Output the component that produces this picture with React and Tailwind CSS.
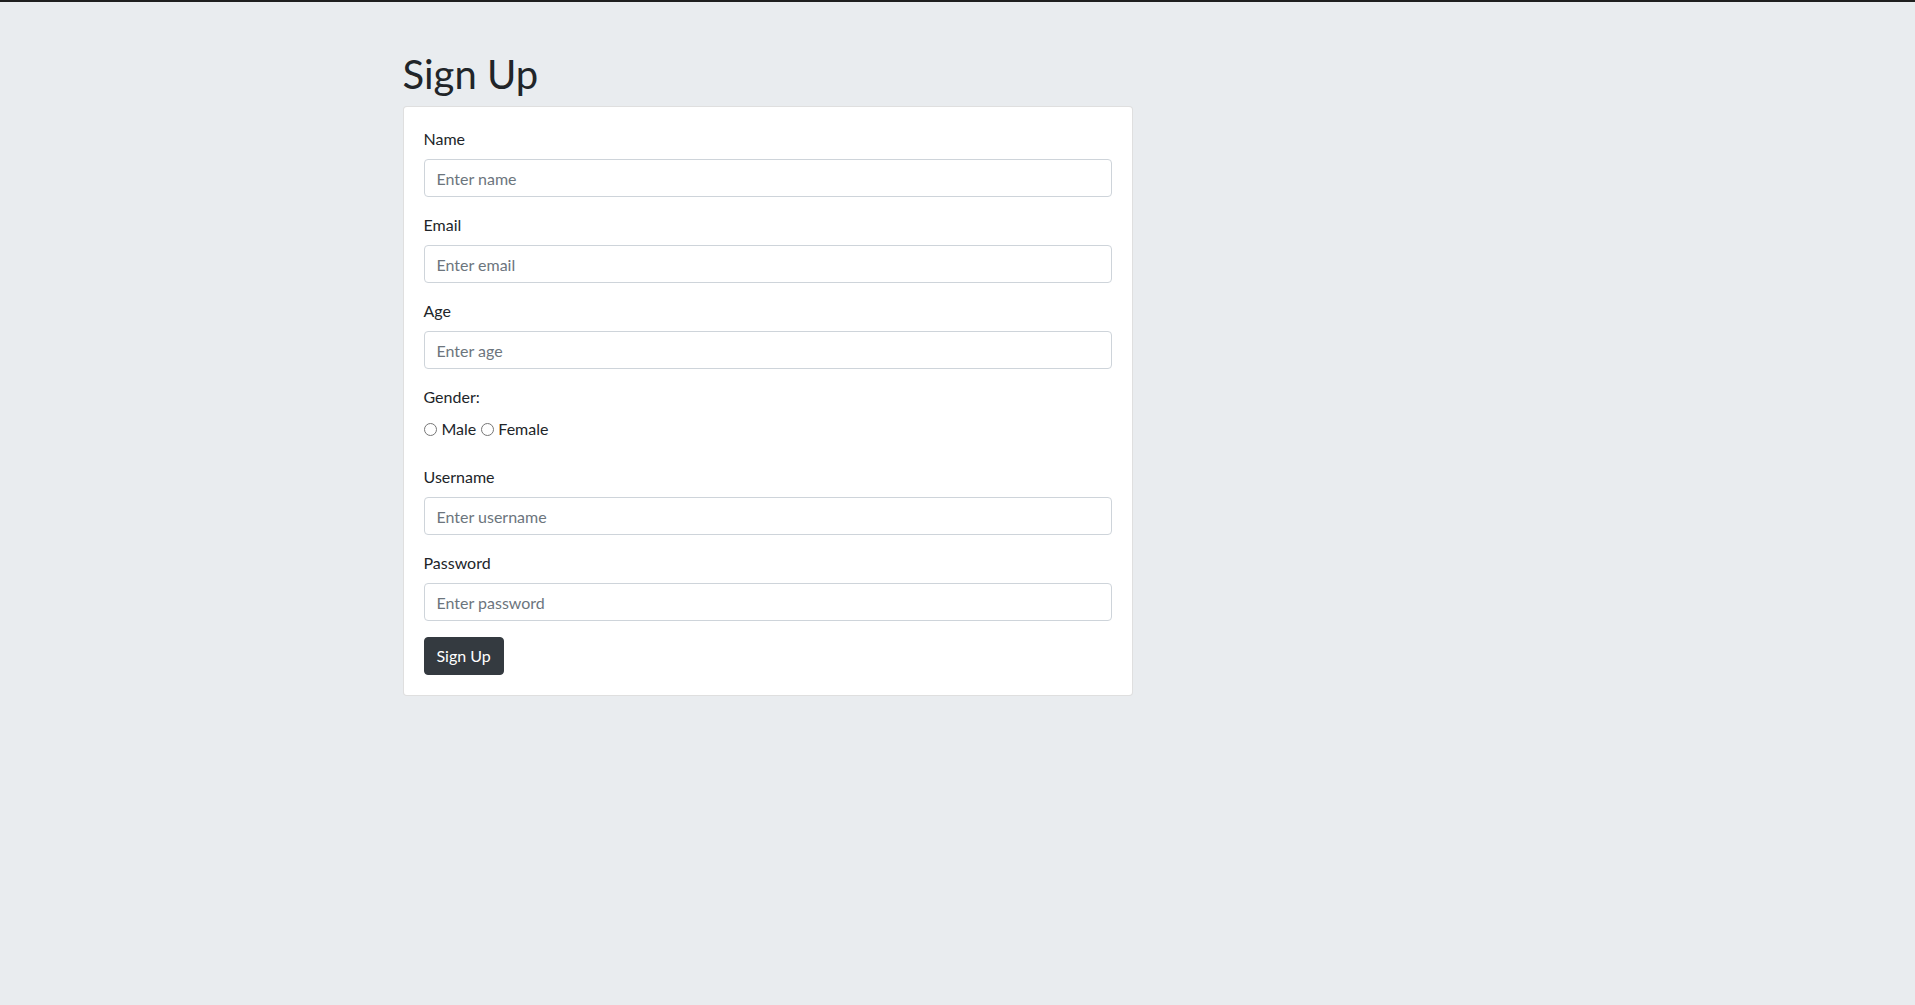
import { useState } from 'react'

const fields = [
  { id: 'name', label: 'Name', placeholder: 'Enter name', type: 'text' },
  { id: 'email', label: 'Email', placeholder: 'Enter email', type: 'email' },
  { id: 'age', label: 'Age', placeholder: 'Enter age', type: 'number' },
]

const cuenta = [
  { id: 'username', label: 'Username', placeholder: 'Enter username', type: 'text' },
  { id: 'password', label: 'Password', placeholder: 'Enter password', type: 'password' },
]

function Campo({ id, label, placeholder, type }) {
  return (
    <div className="mb-4">
      <label htmlFor={id} className="block mb-2 leading-6">{label}</label>
      <input
        id={id}
        type={type}
        placeholder={placeholder}
        className="block w-full h-[38px] px-3 border border-[#ced4da] rounded bg-white text-base text-[#495057] placeholder:text-[#6c757d] outline-none"
      />
    </div>
  )
}

export default function App() {
  const [genero, setGenero] = useState('')

  return (
    <div className="min-h-screen bg-[#e9ecef] text-[#212529] text-base" style={{ fontFamily: 'Lato, "Noto Sans", sans-serif' }}>
      <div className="h-[2px] bg-[#1f1f1f]" />
      <div className="w-[1140px] mx-auto px-[15px] pt-12">
        <div className="w-[730px]">
          <h1 className="text-[40px] leading-[48px] font-normal mb-2">Sign Up</h1>

          {/* Formulario */}
          <form className="bg-white border border-black/[.125] rounded p-5" onSubmit={e => e.preventDefault()}>
            {fields.map(f => <Campo key={f.id} {...f} />)}

            <div className="mb-6">
              <label className="block mb-2 leading-6">Gender:</label>
              <div className="flex items-center h-6">
                <input
                  type="radio"
                  name="gender"
                  checked={genero === 'male'}
                  onChange={() => setGenero('male')}
                  className="w-[13px] h-[13px] mr-[5px]"
                />
                <span>Male</span>
                <input
                  type="radio"
                  name="gender"
                  checked={genero === 'female'}
                  onChange={() => setGenero('female')}
                  className="w-[13px] h-[13px] ml-[5px] mr-[4px]"
                />
                <span>Female</span>
              </div>
            </div>

            {cuenta.map(f => <Campo key={f.id} {...f} />)}

            <button type="submit" className="h-[38px] px-3 rounded bg-[#343a40] border border-[#343a40] text-white leading-6">
              Sign Up
            </button>
          </form>
        </div>
      </div>
    </div>
  )
}
